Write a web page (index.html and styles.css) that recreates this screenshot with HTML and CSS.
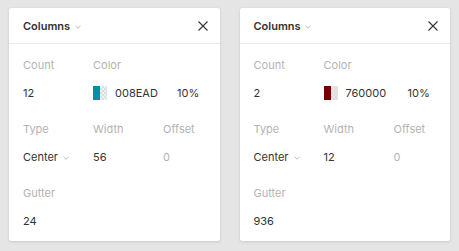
FILE: index.html
```html
<!DOCTYPE html>
<html>
<head>
  <title>Columns</title>
  <link rel="stylesheet" href="styles.css">
</head>
<body>
  <div class="panels">
    <div class="panel">
      <div class="panel-header">
        <span class="title">Columns <svg class="chevron" width="6" height="4" viewBox="0 0 6 4"><path d="M0.5 0.8L3 3.2L5.5 0.8" fill="none" stroke="#b3b3b3" stroke-width="0.9"/></svg></span>
        <svg class="close" width="10" height="10" viewBox="0 0 10 10"><path d="M0.5 0.5L9.5 9.5M9.5 0.5L0.5 9.5" stroke="#333" stroke-width="1.1"/></svg>
      </div>
      <div class="panel-body">
        <div class="grid">
          <div class="field">
            <div class="label">Count</div>
            <div class="value">12</div>
          </div>
          <div class="field wide">
            <div class="label">Color</div>
            <div class="value color-row">
              <span class="swatch"><span class="solid teal"></span><span class="faded teal-faded"></span></span>
              <span class="hex">008EAD</span>
              <span class="pct">10%</span>
            </div>
          </div>
          <div class="field">
            <div class="label">Type</div>
            <div class="value">Center <svg class="chevron" width="6" height="4" viewBox="0 0 6 4"><path d="M0.5 0.8L3 3.2L5.5 0.8" fill="none" stroke="#b3b3b3" stroke-width="0.9"/></svg></div>
          </div>
          <div class="field">
            <div class="label">Width</div>
            <div class="value">56</div>
          </div>
          <div class="field">
            <div class="label">Offset</div>
            <div class="value muted">0</div>
          </div>
          <div class="field">
            <div class="label">Gutter</div>
            <div class="value">24</div>
          </div>
        </div>
      </div>
    </div>

    <div class="panel">
      <div class="panel-header">
        <span class="title">Columns <svg class="chevron" width="6" height="4" viewBox="0 0 6 4"><path d="M0.5 0.8L3 3.2L5.5 0.8" fill="none" stroke="#b3b3b3" stroke-width="0.9"/></svg></span>
        <svg class="close" width="10" height="10" viewBox="0 0 10 10"><path d="M0.5 0.5L9.5 9.5M9.5 0.5L0.5 9.5" stroke="#333" stroke-width="1.1"/></svg>
      </div>
      <div class="panel-body">
        <div class="grid">
          <div class="field">
            <div class="label">Count</div>
            <div class="value">2</div>
          </div>
          <div class="field wide">
            <div class="label">Color</div>
            <div class="value color-row">
              <span class="swatch"><span class="solid red"></span><span class="faded red-faded"></span></span>
              <span class="hex">760000</span>
              <span class="pct">10%</span>
            </div>
          </div>
          <div class="field">
            <div class="label">Type</div>
            <div class="value">Center <svg class="chevron" width="6" height="4" viewBox="0 0 6 4"><path d="M0.5 0.8L3 3.2L5.5 0.8" fill="none" stroke="#b3b3b3" stroke-width="0.9"/></svg></div>
          </div>
          <div class="field">
            <div class="label">Width</div>
            <div class="value">12</div>
          </div>
          <div class="field">
            <div class="label">Offset</div>
            <div class="value muted">0</div>
          </div>
          <div class="field">
            <div class="label">Gutter</div>
            <div class="value">936</div>
          </div>
        </div>
      </div>
    </div>
  </div>
</body>
</html>
```

FILE: styles.css
```css
body {
  margin: 0;
  background-color: #e5e5e5;
  font-family: Inter, "Liberation Sans", sans-serif;
  font-size: 11px;
  color: #333;
}

.panels {
  display: flex;
  gap: 20px;
  padding: 8px 9px;
}

.panel {
  width: 211px;
  height: 233px;
  background-color: #fff;
  border-radius: 2px;
  box-shadow: 0 1px 3px rgba(0, 0, 0, 0.12), 0 0 1px rgba(0, 0, 0, 0.1);
  box-sizing: border-box;
}

.panel-header {
  height: 35px;
  display: flex;
  align-items: center;
  justify-content: space-between;
  padding: 0 12px 0 14px;
  border-bottom: 1px solid #e8e8e8;
}

.title {
  font-weight: 600;
}

.chevron {
  margin-left: 2px;
  vertical-align: middle;
}

.panel-body {
  padding: 13px 14px 12px;
}

.grid {
  display: grid;
  grid-template-columns: 70px 70px auto;
  row-gap: 20px;
}

.field.wide {
  grid-column: span 2;
}

.label {
  color: #b3b3b3;
  line-height: 16px;
}

.value {
  line-height: 16px;
  margin-top: 12px;
}

.value.muted {
  color: #b3b3b3;
}

.color-row {
  display: flex;
  align-items: center;
}

.swatch {
  display: flex;
  width: 14px;
  height: 14px;
  margin-right: 8px;
}

.solid {
  width: 7px;
  height: 14px;
}

.faded {
  width: 7px;
  height: 14px;
  background-image:
    linear-gradient(45deg, #dcdcdc 25%, transparent 25%, transparent 75%, #dcdcdc 75%),
    linear-gradient(45deg, #dcdcdc 25%, transparent 25%, transparent 75%, #dcdcdc 75%);
  background-size: 4px 4px;
  background-position: 0 0, 2px 2px;
}

.teal { background-color: #008ead; }
.teal-faded { background-color: #e6f4f7; }
.red { background-color: #760000; }
.red-faded { background-color: #f1e6e6; }

.hex {
  width: 62px;
}
```
